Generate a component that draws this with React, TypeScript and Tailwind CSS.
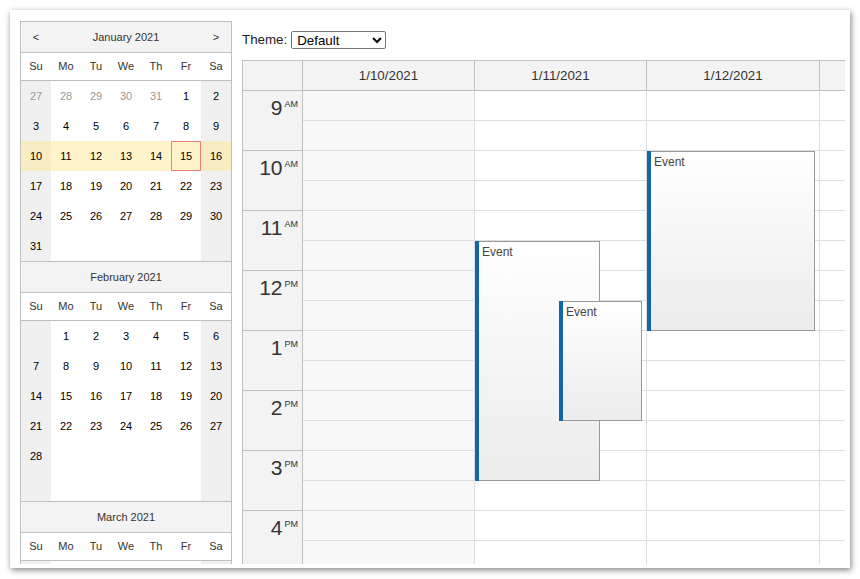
import React from "react";

type Cell = { d?: number; other?: boolean };

type CalEvent = { text: string; start: number; end: number; left: number; width: number };

type Day = { label: string; width: string; weekend?: boolean; events: CalEvent[] };

const dow = ["Su", "Mo", "Tu", "We", "Th", "Fr", "Sa"];

function buildWeeks(offset: number, days: number, prevDays?: number): Cell[][] {
  const cells: Cell[] = [];
  for (let i = 0; i < offset; i++) {
    cells.push(prevDays ? { d: prevDays - offset + 1 + i, other: true } : {});
  }
  for (let d = 1; d <= days; d++) cells.push({ d });
  while (cells.length < 42) cells.push({});
  const weeks: Cell[][] = [];
  for (let w = 0; w < 6; w++) weeks.push(cells.slice(w * 7, w * 7 + 7));
  return weeks;
}

// March is cut off right under its day names, only the cell backgrounds peek out
const emptyWeek: Cell[][] = [[{}, {}, {}, {}, {}, {}, {}]];

const months = [
  { title: "January 2021", weeks: buildWeeks(5, 31, 31), arrows: true, selectedRow: 2, today: 15, last: false },
  { title: "February 2021", weeks: buildWeeks(1, 28), arrows: false, selectedRow: -1, today: -1, last: false },
  { title: "March 2021", weeks: emptyWeek, arrows: false, selectedRow: -1, today: -1, last: true },
];

const hours = [
  { h: "9", m: "AM" },
  { h: "10", m: "AM" },
  { h: "11", m: "AM" },
  { h: "12", m: "PM" },
  { h: "1", m: "PM" },
  { h: "2", m: "PM" },
  { h: "3", m: "PM" },
  { h: "4", m: "PM" },
];

const days: Day[] = [
  { label: "1/10/2021", width: "w-[172px]", weekend: true, events: [] },
  {
    label: "1/11/2021",
    width: "w-[172px]",
    events: [
      { text: "Event", start: 11.5, end: 15.5, left: 0, width: 125 },
      { text: "Event", start: 12.5, end: 14.5, left: 84, width: 83 },
    ],
  },
  {
    label: "1/12/2021",
    width: "w-[173px]",
    events: [{ text: "Event", start: 10, end: 13, left: 0, width: 168 }],
  },
  // next day, scrolled out of view
  { label: "", width: "w-[172px]", events: [] },
];

const dayStart = 9;
const hourHeight = 60;

function Month({ m }: { m: (typeof months)[number] }) {
  return (
    <div className={m.last ? "" : "border-b border-[#c0c0c0]"}>
      {/* Title */}
      <div className="grid grid-cols-7 h-[31px] border-b border-[#c0c0c0] bg-[#f3f3f3] text-[#333] items-center text-center">
        <span>{m.arrows ? "<" : ""}</span>
        <span className="col-span-5">{m.title}</span>
        <span>{m.arrows ? ">" : ""}</span>
      </div>
      {/* Day names */}
      <div className="grid grid-cols-7 h-[28px] border-b border-[#c0c0c0] items-center text-center text-[#333]">
        {dow.map((d) => (
          <span key={d}>{d}</span>
        ))}
      </div>
      {/* Weeks */}
      {m.weeks.map((week, wi) => (
        <div key={wi} className="grid grid-cols-7">
          {week.map((c, ci) => {
            const weekend = ci === 0 || ci === 6;
            const selected = wi === m.selectedRow;
            let bg = weekend ? "bg-[#f0f0f0]" : "bg-white";
            if (selected) bg = weekend ? "bg-[#f8ecc2]" : "bg-[#fff3ca]";
            const today = !c.other && c.d === m.today;
            return (
              <div
                key={ci}
                className={`h-[30px] flex items-center justify-center ${bg} ${
                  c.other ? "text-[#999]" : "text-black"
                } ${today ? "border border-[#f08080]" : ""}`}
              >
                {c.d ?? ""}
              </div>
            );
          })}
        </div>
      ))}
    </div>
  );
}

export default function App() {
  return (
    <div className="min-h-screen bg-white p-[10px] font-['Liberation_Sans',Arial,sans-serif]">
      <div className="w-[840px] h-[558px] bg-white shadow-[1px_2px_6px_rgba(0,0,0,0.5)] pl-[10px] pt-[10px]">
        <div className="flex h-[544px] overflow-hidden">
          {/* Navigator */}
          <div className="w-[212px] shrink-0 mt-[1px] self-start border-x border-t border-[#c0c0c0] text-[11px]">
            {months.map((m) => (
              <Month key={m.title} m={m} />
            ))}
          </div>

          {/* Calendar */}
          <div className="ml-[10px] flex flex-col min-w-0">
            <div className="h-[40px] flex items-center text-[13.33px] text-[#222]">
              <span>Theme:</span>
              <select
                defaultValue="Default"
                className="ml-[4px] h-[18px] w-[95px] border border-[#767676] rounded-[2px] bg-white text-[13.33px] text-black pl-[1px]"
              >
                <option>Default</option>
                <option>Green</option>
                <option>Traditional</option>
                <option>Transparent</option>
                <option>White</option>
              </select>
            </div>

            <div className="w-[603px] flex-1 overflow-hidden border-l border-t border-[#c0c0c0] text-[#333]">
              <div className="w-max">
                {/* Column headers */}
                <div className="flex h-[30px] border-b border-[#c0c0c0] bg-[#f3f3f3] text-[13.33px]">
                  <div className="w-[60px] shrink-0 border-r border-[#c0c0c0]" />
                  {days.map((d, i) => (
                    <div
                      key={i}
                      className={`${d.width} shrink-0 border-r border-[#c0c0c0] flex items-center justify-center`}
                    >
                      {d.label}
                    </div>
                  ))}
                </div>

                {/* Body */}
                <div className="flex">
                  <div className="w-[60px] shrink-0 border-r border-[#c0c0c0] bg-[#f3f3f3]">
                    {hours.map((h) => (
                      <div
                        key={h.h + h.m}
                        className="h-[60px] border-b border-[#c0c0c0] pr-[4px] pt-[4px] text-right text-[#333]"
                      >
                        <span className="text-[21px] leading-[26px]">{h.h}</span>
                        <span className="ml-[2px] align-top text-[9px] leading-[18px]">{h.m}</span>
                      </div>
                    ))}
                  </div>

                  {days.map((d, di) => (
                    <div
                      key={di}
                      className={`${d.width} shrink-0 relative border-r border-[#dedede] ${
                        d.weekend ? "bg-[#f8f8f8]" : "bg-white"
                      }`}
                    >
                      {hours.flatMap(() => [0, 1]).map((_, i) => (
                        <div key={i} className="h-[30px] border-b border-[#dedede]" />
                      ))}

                      {d.events.map((e, i) => (
                        <div
                          key={i}
                          className="absolute border-y border-r border-[#999] bg-linear-to-b from-white to-[#ececec] text-[12px] text-[#444] pl-[7px] pt-[3px] leading-[14px]"
                          style={{
                            top: (e.start - dayStart) * hourHeight,
                            height: (e.end - e.start) * hourHeight,
                            left: e.left,
                            width: e.width,
                          }}
                        >
                          <div className="absolute left-0 -top-px -bottom-px w-[4px] bg-[#1066a8]" />
                          {e.text}
                        </div>
                      ))}
                    </div>
                  ))}
                </div>
              </div>
            </div>
          </div>
        </div>
      </div>
    </div>
  );
}
